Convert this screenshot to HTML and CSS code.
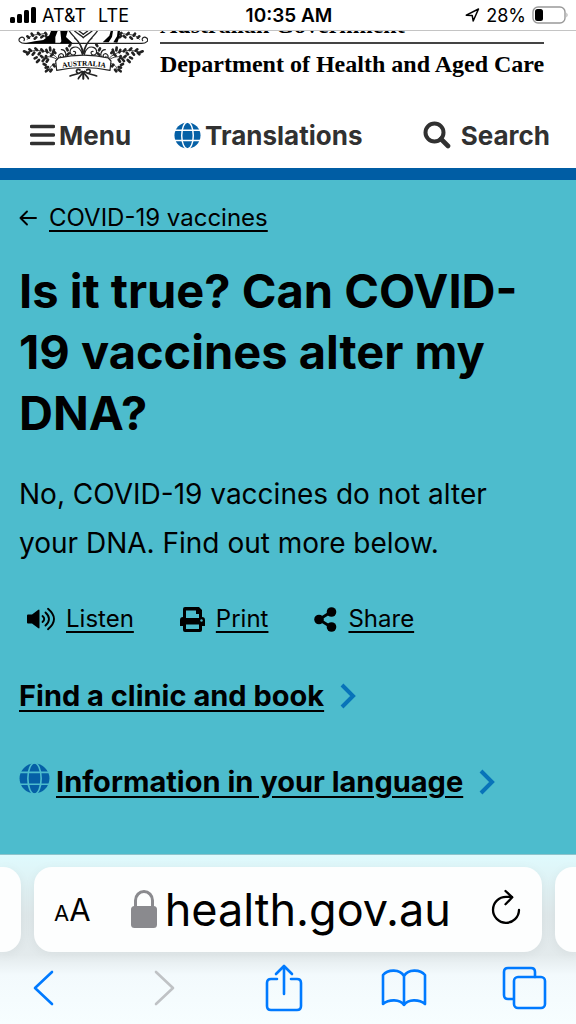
FILE: index.html
```html
<!DOCTYPE html>
<html lang="en">
<head>
    <meta charset="UTF-8">
    <meta name="viewport" content="width=device-width, initial-scale=1.0">
    <title>Is it true? Can COVID-19 vaccines alter my DNA?</title>
    <link rel="stylesheet" href="styles.css">
</head>
<body>
    <!-- Icons used more than once -->
    <svg class="sprite" aria-hidden="true">
        <symbol id="globe" viewBox="0 0 28 28">
            <circle cx="14" cy="14" r="13.5" fill="#0560a6"/>
            <g fill="none" stroke="var(--globe-line)" stroke-width="1.5">
                <ellipse cx="14" cy="14" rx="6" ry="14"/>
                <path d="M0 8.500h28M0 19.200h28"/>
            </g>
        </symbol>
        <symbol id="chevron" viewBox="0 0 16 26">
            <path d="M2 2l11 11L2 24" fill="none" stroke="#0873b9" stroke-width="4"/>
        </symbol>
    </svg>

    <div class="status-bar">
        <div class="carrier">
            <svg width="26" height="16" viewBox="0 0 26 16" aria-hidden="true">
                <rect x="0" y="10" width="5" height="6" rx="1.5"/>
                <rect x="7" y="7" width="5" height="9" rx="1.5"/>
                <rect x="14" y="3" width="5" height="13" rx="1.5"/>
                <rect x="21" y="0" width="5" height="16" rx="1.5"/>
            </svg>
            <span>AT&amp;T</span>
            <span>LTE</span>
        </div>
        <time class="clock">10:35 AM</time>
        <div class="battery">
            <svg width="15" height="14" viewBox="0 0 15 14" aria-hidden="true">
                <path d="M1.3 7.2L13.5 1 8.2 13 7.2 7.4z" fill="none" stroke="#000" stroke-width="1.5" stroke-linejoin="round"/>
            </svg>
            <span>28%</span>
            <svg width="36" height="18" viewBox="0 0 36 18" aria-hidden="true">
                <rect x="1" y="1" width="32" height="16" rx="5" fill="none" stroke="#999" stroke-width="1.4"/>
                <rect x="3" y="3" width="8" height="12" rx="2.5"/>
                <path d="M34.500 6.500q2 2.500 0 5z" fill="#999"/>
            </svg>
        </div>
    </div>

    <header class="site-header">
        <a class="brand" href="#" aria-label="Department of Health and Aged Care">
            <svg class="crest" viewBox="24 9 390 147" aria-hidden="true">
                <defs>
                    <g id="crest-half" fill="none" stroke="#222" stroke-width="3.500" stroke-linecap="round">
                        <path d="M220 46H48C30 47 22 37 30 30c8-6 17 1 12 8"/>
                        <path d="M178 9c10 18 38 32 42 66M194 9c10 10 22 14 26 20M207 9l13 10M194 30c10 8 20 20 24 46" stroke-width="4"/>
                        <path d="M218 82c-4-20-16-28-28-24-14 5-12 24 0 23 9-1 9-12 1-11"/>
                        <path d="M144 92c-22-24-60-30-92-20M144 96c-16-12-34-12-50-6M140 106c-14 2-20 10-22 20" stroke-width="2.500"/>
                        <path d="M147 90c-5-10 8-18 13-9 3 8-8 12-8 4M160 90c14-6 6-26-6-25"/>
                        <path d="M52 34c16-22 30-8 56-20" stroke-width="2.500"/>
                        <path d="M210 126c-8-6-16 4-6 10M216 130c-10 10-22 8-36 14M219 132c-4 10-12 14-14 20M220 132v20" stroke-width="5"/>
                        <g stroke-width="8">
                            <path d="M42 70l7 3M52 79l5-5M58 64l5 4M68 80l5-6M76 61l5 5M86 79l4-5M94 64l5 6M109 66l3 7M120 59l1 8M132 65l-3 9M123 83l5-4"/>
                            <path d="M74 91l6-3M81 102l6-6M93 84l4 3M98 99l5-6M108 84l1 6M110 101l4-6M107 119l7-2M108 130l6-5M125 125l-4 5M130 110l4 5M101 108l6 3"/>
                            <path d="M52 25l5 4M65 17l4 6M74 32l5-4M84 15l5 5M94 28l5-4M106 15l3 4M111 28l-4-4M131 70l5 5"/>
                            <path d="M170 61l3 6M181 50l-3 4M172 80l5-4"/>
                        </g>
                    </g>
                    <path id="motto" d="M146 122Q222 105 298 122"/>
                </defs>
                <use href="#crest-half"/>
                <use href="#crest-half" transform="translate(440 0) scale(-1 1)"/>
                <path d="M45 46q30-8 55-10l18-14 5-13h20l-7 18v19zM151 9h22l-5 18 20 19h-38l4-6zM278 43l20-20 4-14h7l-3 18-10 16zM310 43l11-18 2-16h7l-2 18-6 17z" fill="#000"/>
                <path d="M137 99l8-9q77-17 150 0l8 9-3 28q-79-17-160 0z" fill="#fff" stroke="#222" stroke-width="3.500" stroke-linejoin="round"/>
                <text class="motto"><textPath href="#motto" startOffset="50%" text-anchor="middle">AUSTRALIA</textPath></text>
            </svg>
            <span class="brand-text">
                <span class="government">Australian Government</span>
                <span class="department">Department of Health and Aged Care</span>
            </span>
        </a>
        <nav class="main-nav">
            <button class="nav-button" type="button">
                <svg width="25" height="22" viewBox="0 0 25 22" aria-hidden="true">
                    <path d="M1.500 2.500h22M1.500 11h22M1.500 19.500h22" stroke="#313131" stroke-width="3.400" stroke-linecap="round"/>
                </svg>
                Menu
            </button>
            <a class="nav-button" href="#">
                <svg class="globe" width="27" height="27" aria-hidden="true"><use href="#globe"/></svg>
                Translations
            </a>
            <button class="nav-button search" type="button">
                <svg width="28" height="28" viewBox="0 0 28 28" aria-hidden="true">
                    <circle cx="11.500" cy="11.500" r="9" fill="none" stroke="#313131" stroke-width="4"/>
                    <path d="M18 18l7 7" stroke="#313131" stroke-width="4.600" stroke-linecap="round"/>
                </svg>
                Search
            </button>
        </nav>
    </header>

    <main class="hero">
        <div class="breadcrumb">
            <svg width="18" height="16" viewBox="0 0 18 16" aria-hidden="true">
                <path d="M17 8H1.500M8 1.500L1.500 8 8 14.500" fill="none" stroke="#000" stroke-width="1.900" stroke-linecap="round" stroke-linejoin="round"/>
            </svg>
            <a href="#">COVID-19 vaccines</a>
        </div>
        <h1>Is it true? Can COVID-19 vaccines alter my DNA?</h1>
        <p class="summary">No, COVID-19 vaccines do not alter your DNA. Find out more below.</p>
        <div class="page-tools">
            <a href="#">
                <svg width="28" height="24" viewBox="0 0 28 24" aria-hidden="true">
                    <path d="M0 8.500q0-1 1-1h4L11 3q1.500-1 1.500.5v17q0 1.500-1.500.5l-6-4.500H1q-1 0-1-1z"/>
                    <path d="M15.500 9q3.500 3 0 6M18.500 5.500q7 6.500 0 13M21 1.800q12 10.200 0 20.400" fill="none" stroke="#000" stroke-width="1.900" stroke-linecap="round"/>
                </svg>
                <span>Listen</span>
            </a>
            <a href="#">
                <svg width="25" height="25" viewBox="0 0 25 25" aria-hidden="true">
                    <path d="M3 2q0-2 2-2h14l3 3v7q3 0 3 3v6h-3v4q0 2-2 2H5q-2 0-2-2v-4H0v-6q0-3 3-3z"/>
                    <path d="M6 3.500h10V7h3v4H6zM6 17.500h13v4.500H6z" fill="#4dbccd"/>
                    <circle cx="21.500" cy="13.500" r="1.200" fill="#4dbccd"/>
                </svg>
                <span>Print</span>
            </a>
            <a href="#">
                <svg width="23" height="25" viewBox="0 0 23 25" aria-hidden="true">
                    <path d="M17 5L5 12.500 17 20" fill="none" stroke="#000" stroke-width="2.800"/>
                    <circle cx="17.500" cy="5" r="4.800"/>
                    <circle cx="5" cy="12.500" r="4.800"/>
                    <circle cx="17.500" cy="20" r="4.800"/>
                </svg>
                <span>Share</span>
            </a>
        </div>
        <div class="actions">
            <a href="#">
                <span>Find a clinic and book</span>
                <svg class="chevron" width="16" height="26" aria-hidden="true"><use href="#chevron"/></svg>
            </a>
            <a href="#">
                <svg class="globe" width="31" height="31" aria-hidden="true"><use href="#globe"/></svg>
                <span>Information in your language</span>
                <svg class="chevron" width="16" height="26" aria-hidden="true"><use href="#chevron"/></svg>
            </a>
        </div>
    </main>

    <footer class="browser-bar">
        <div class="tabs">
            <div class="tab-edge left"></div>
            <div class="address">
                <button class="text-size" type="button" aria-label="Text size"><span>A</span>A</button>
                <div class="url">
                    <svg width="26" height="39" viewBox="0 0 26 39" aria-hidden="true">
                        <path d="M4.500 18V10.500a8.500 9 0 0 1 17 0V18" fill="none" stroke="#8a8a8e" stroke-width="3"/>
                        <rect y="16" width="26" height="22" rx="3.500" fill="#8a8a8e"/>
                    </svg>
                    <span>health.gov.au</span>
                </div>
                <button class="reload" type="button" aria-label="Reload">
                    <svg width="30" height="36" viewBox="0 0 30 36" fill="none" stroke="#000" stroke-width="2.300" stroke-linecap="round" stroke-linejoin="round">
                        <path d="M28 21a13 13 0 1 1-13-13.200h6M14.500 2l6.800 6.300-6.800 7"/>
                    </svg>
                </button>
            </div>
            <div class="tab-edge right"></div>
        </div>
        <div class="toolbar">
            <button type="button" aria-label="Back">
                <svg width="22" height="36" viewBox="0 0 22 36"><path d="M19 2L2 18l17 16"/></svg>
            </button>
            <button type="button" aria-label="Forward" disabled>
                <svg width="22" height="36" viewBox="0 0 22 36"><path d="M3 2l17 16L3 34"/></svg>
            </button>
            <button type="button" aria-label="Share">
                <svg width="38" height="48" viewBox="0 0 38 48"><path d="M12 15H6q-4 0-4 4v23q0 4 4 4h26q4 0 4-4V19q0-4-4-4h-6M19 30V2M11 10l8-8 8 8"/></svg>
            </button>
            <button type="button" aria-label="Bookmarks">
                <svg width="46" height="38" viewBox="0 0 46 38"><path d="M23 7C19 0 7 0 2 6v29c6-5 17-5 21 1 4-6 15-6 21-1V6C39 0 27 0 23 7zv29"/></svg>
            </button>
            <button type="button" aria-label="Tabs">
                <svg width="46" height="44" viewBox="-1 -1 46 44"><path d="M11 32H6q-4 0-4-4V5q0-4 4-4h23q4 0 4 4v5"/><rect x="12" y="10" width="31" height="31" rx="4"/></svg>
            </button>
        </div>
    </footer>
</body>
</html>
```
FILE: styles.css
```css
* {
    box-sizing: border-box;
}

body {
    margin: 0;
    min-height: 100vh;
    display: flex;
    flex-direction: column;
    font-family: Inter, "Liberation Sans", sans-serif;
    color: #000;
    background-color: #fff;
}

svg {
    display: block;
    flex: none;
}

a {
    color: inherit;
}

button {
    padding: 0;
    border: none;
    background: none;
    font: inherit;
    color: inherit;
    cursor: pointer;
}

.sprite {
    position: absolute;
    width: 0;
    height: 0;
}

/* Status bar */
.status-bar {
    display: grid;
    grid-template-columns: 1fr auto 1fr;
    align-items: center;
    height: 31px;
    padding: 0 8px 0 10px;
    border-bottom: 1px solid #c4c4c4;
    font-size: 18px;
}

.carrier,
.battery {
    display: flex;
    align-items: center;
    gap: 6px;
}

.carrier span + span {
    margin-left: 6px;
}

.battery {
    justify-content: flex-end;
}

.clock {
    font-size: 19px;
    font-weight: 600;
}

/* Site header */
.site-header {
    border-bottom: 12px solid #005da4;
    color: #313131;
}

.brand {
    display: flex;
    height: 49px;
    padding-left: 18px;
    gap: 12px;
    overflow: hidden;
    text-decoration: none;
    color: #000;
}

.crest {
    width: 130px;
    height: 49px;
}

.motto {
    font: bold 22px "Liberation Serif", serif;
}

.brand-text {
    display: flex;
    flex-direction: column;
    justify-content: flex-end;
    font-family: "Liberation Serif", serif;
    font-weight: bold;
    font-size: 24px;
    white-space: nowrap;
}

.government {
    padding-bottom: 2px;
    border-bottom: 2px solid #444;
    line-height: 30px;
}

.department {
    padding-top: 4px;
    line-height: 32px;
}

.main-nav {
    display: flex;
    align-items: center;
    height: 88px;
    padding: 22px 26px 0 30px;
    gap: 43px;
}

.nav-button {
    display: flex;
    align-items: center;
    gap: 4px;
    font-size: 26px;
    font-weight: 700;
    text-decoration: none;
}

.search {
    gap: 10px;
    margin-left: auto;
}

.globe {
    --globe-line: #fff;
}

/* Hero */
.hero {
    flex: 1;
    padding: 20px 48px 48px 19px;
    background-color: #4dbccd;
}

.hero a {
    text-underline-offset: 4px;
}

.breadcrumb {
    display: flex;
    align-items: center;
    gap: 12px;
    font-size: 24px;
    line-height: 36px;
}

h1 {
    margin: 24px 0 0;
    font-size: 47px;
    font-weight: 700;
    line-height: 61px;
}

.summary {
    margin: 27px 0 0;
    font-size: 28px;
    line-height: 49px;
}

.page-tools {
    display: flex;
    gap: 46px;
    margin-top: 32px;
    padding-left: 8px;
    font-size: 24px;
    line-height: 38px;
}

.page-tools a {
    display: flex;
    align-items: center;
    gap: 11px;
    text-decoration: none;
}

.page-tools span,
.actions span {
    text-decoration: underline;
}

.actions {
    display: grid;
    gap: 48px;
    margin-top: 39px;
    font-size: 29px;
    font-weight: 700;
    line-height: 38px;
}

.actions a {
    display: flex;
    align-items: center;
    text-decoration: none;
}

.actions .globe {
    --globe-line: #4dbccd;
    align-self: flex-start;
    margin-right: 6px;
}

.chevron {
    margin-left: 16px;
}

/* Browser bar */
.browser-bar {
    border-top: 1px solid #8fc3cb;
    background: linear-gradient(#dffafd 0, #dfe8ea 60px, #e3eaec 100px, #f3fafd 120px, #f7feff 100%);
}

.tabs {
    display: flex;
    gap: 13px;
    padding-top: 12px;
}

.tab-edge,
.address {
    height: 85px;
    background-color: #fdfefe;
    box-shadow: 0 2px 12px rgba(0, 0, 0, 0.05);
}

.tab-edge {
    width: 21px;
}

.tab-edge.left {
    border-radius: 0 18px 18px 0;
}

.tab-edge.right {
    border-radius: 18px 0 0 18px;
}

.address {
    flex: 1;
    display: flex;
    align-items: center;
    justify-content: space-between;
    padding: 0 21px 0 20px;
    border-radius: 18px;
}

.text-size {
    font-size: 31px;
}

.text-size span {
    font-size: 22px;
}

.url {
    display: flex;
    align-items: center;
    gap: 8px;
    font-size: 45px;
}

.reload {
    padding-bottom: 6px;
}

.toolbar {
    display: flex;
    align-items: center;
    justify-content: space-between;
    height: 72px;
    padding: 0 29px 0 21px;
}

.toolbar button {
    display: flex;
    justify-content: center;
    width: 46px;
}

.toolbar svg {
    fill: none;
    stroke: #007aff;
    stroke-width: 2.6px;
    stroke-linecap: round;
    stroke-linejoin: round;
}

.toolbar button:disabled svg {
    stroke: #bfc2c5;
}
```
